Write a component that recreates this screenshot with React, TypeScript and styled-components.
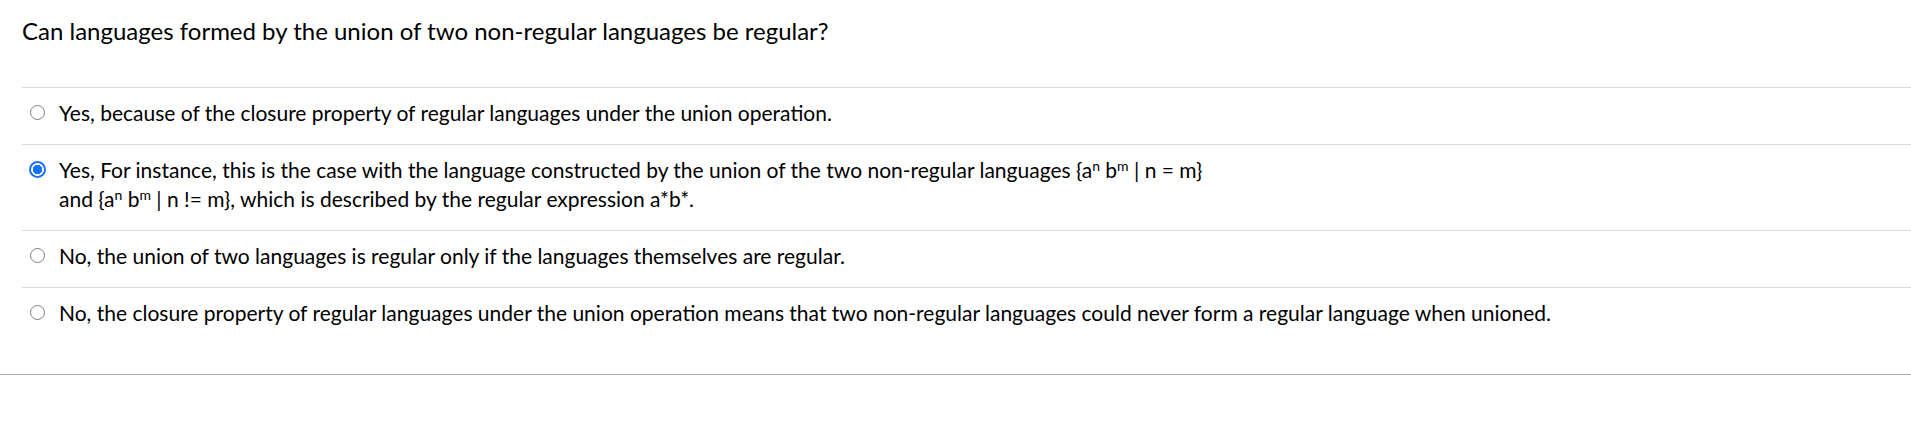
import React from "react";
import styled, { createGlobalStyle } from "styled-components";

const GlobalStyle = createGlobalStyle`
  html, body {
    margin: 0;
    padding: 0;
    background: #ffffff;
  }
  body {
    font-family: Lato, "Open Sans", "Liberation Sans", sans-serif;
    color: #000000;
  }
`;

const Page = styled.div`
  width: 1911px;
  height: 436px;
  box-sizing: border-box;
  background: #ffffff;
`;

const QuestionBlock = styled.section`
  padding: 0 0 30px 22px;
  border-bottom: 1px solid #a8a8a8;
`;

const QuestionText = styled.h2`
  margin: 0;
  padding: 14px 0 40px;
  font-size: 24px;
  line-height: 33px;
  font-weight: 400;
  color: #000000;
`;

const AnswerList = styled.div`
  display: flex;
  flex-direction: column;
`;

const AnswerRow = styled.label`
  display: flex;
  align-items: flex-start;
  border-top: 1px solid #dcdcdc;
  padding: 10px 0 17px;
  font-size: 21px;
  line-height: 29px;
  cursor: pointer;
`;

const RadioSlot = styled.span`
  flex: 0 0 37px;
  height: 29px;
  display: flex;
  align-items: center;
  padding-left: 7px;
  box-sizing: border-box;
`;

const RadioMark = styled.span<{ $checked?: boolean }>`
  box-sizing: border-box;
  display: inline-block;
  border-radius: 50%;
  width: ${(p) => (p.$checked ? "17px" : "15px")};
  height: ${(p) => (p.$checked ? "17px" : "15px")};
  margin-left: ${(p) => (p.$checked ? "0" : "0.5px")};
  border: ${(p) => (p.$checked ? "2px solid #1a73ff" : "1.5px solid #808080")};
  background: ${(p) =>
    p.$checked
      ? "radial-gradient(circle, #1a73ff 0 4.5px, #ffffff 5px)"
      : "#ffffff"};
`;

const AnswerText = styled.span`
  color: #000000;
`;

const Sup = styled.sup`
  font-size: 14px;
  line-height: 0;
  vertical-align: 7px;
`;

const answers: { key: string; checked?: boolean; content: React.ReactNode }[] = [
  {
    key: "a",
    content:
      "Yes, because of the closure property of regular languages under the union operation.",
  },
  {
    key: "b",
    checked: true,
    content: (
      <>
        Yes, For instance, this is the case with the language constructed by the union of the two
        non-regular languages {"{"}a<Sup>n</Sup> b<Sup>m</Sup> | n = m{"}"}
        <br />
        and {"{"}a<Sup>n</Sup> b<Sup>m</Sup> | n != m{"}"}, which is described by the regular
        expression a*b*.
      </>
    ),
  },
  {
    key: "c",
    content:
      "No, the union of two languages is regular only if the languages themselves are regular.",
  },
  {
    key: "d",
    content:
      "No, the closure property of regular languages under the union operation means that two non-regular languages could never form a regular language when unioned.",
  },
];

export default function App() {
  return (
    <Page>
      <GlobalStyle />
      <QuestionBlock>
        <QuestionText>
          Can languages formed by the union of two non-regular languages be regular?
        </QuestionText>
        <AnswerList>
          {answers.map((a) => (
            <AnswerRow key={a.key}>
              <RadioSlot>
                <RadioMark $checked={a.checked} />
              </RadioSlot>
              <AnswerText>{a.content}</AnswerText>
            </AnswerRow>
          ))}
        </AnswerList>
      </QuestionBlock>
    </Page>
  );
}
